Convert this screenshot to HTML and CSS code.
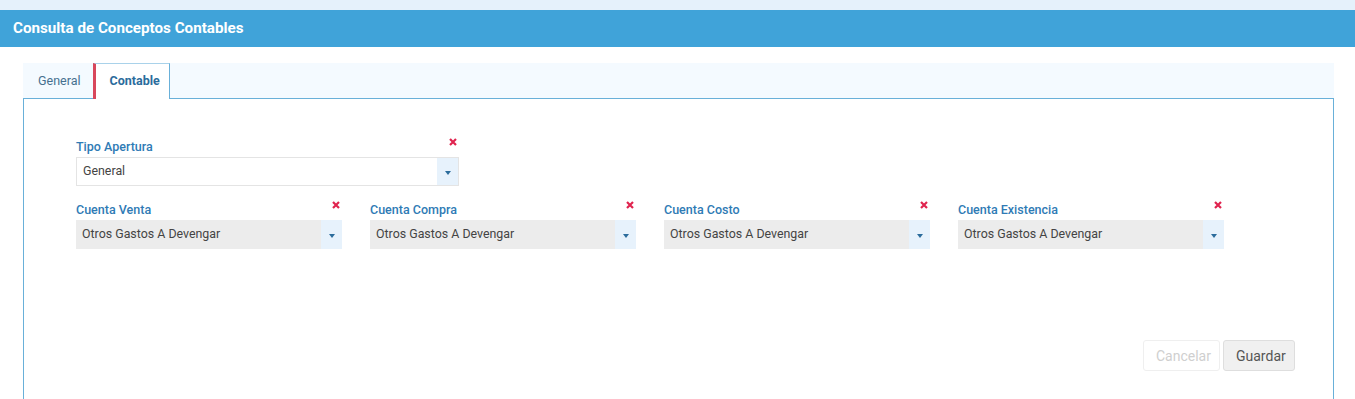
FILE: index.html
```html
<!DOCTYPE html>
<html>
<head>
<meta charset="utf-8">
<link rel="stylesheet" href="styles.css">
</head>
<body>
<div class="topstrip"></div>
<header class="titlebar">Consulta de Conceptos Contables</header>
<div class="card">
  <nav class="tabs">
    <div class="tab">General</div>
    <div class="tab active">Contable</div>
  </nav>
  <section class="panel">
    <div class="field wide">
      <div class="field-head"><span class="label">Tipo Apertura</span><svg class="clear" viewBox="0 0 10 10"><path d="M2 2L8 8M8 2L2 8"/></svg></div>
      <div class="select white"><span class="value">General</span><span class="arrow"><i class="tri"></i></span></div>
    </div>
    <div class="row">
      <div class="field">
        <div class="field-head"><span class="label">Cuenta Venta</span><svg class="clear" viewBox="0 0 10 10"><path d="M2 2L8 8M8 2L2 8"/></svg></div>
        <div class="select"><span class="value">Otros Gastos A Devengar</span><span class="arrow"><i class="tri"></i></span></div>
      </div>
      <div class="field">
        <div class="field-head"><span class="label">Cuenta Compra</span><svg class="clear" viewBox="0 0 10 10"><path d="M2 2L8 8M8 2L2 8"/></svg></div>
        <div class="select"><span class="value">Otros Gastos A Devengar</span><span class="arrow"><i class="tri"></i></span></div>
      </div>
      <div class="field">
        <div class="field-head"><span class="label">Cuenta Costo</span><svg class="clear" viewBox="0 0 10 10"><path d="M2 2L8 8M8 2L2 8"/></svg></div>
        <div class="select"><span class="value">Otros Gastos A Devengar</span><span class="arrow"><i class="tri"></i></span></div>
      </div>
      <div class="field">
        <div class="field-head"><span class="label">Cuenta Existencia</span><svg class="clear" viewBox="0 0 10 10"><path d="M2 2L8 8M8 2L2 8"/></svg></div>
        <div class="select"><span class="value">Otros Gastos A Devengar</span><span class="arrow"><i class="tri"></i></span></div>
      </div>
    </div>
    <div class="actions">
      <button class="btn btn-cancel">Cancelar</button>
      <button class="btn btn-save">Guardar</button>
    </div>
  </section>
</div>
</body>
</html>
```
FILE: styles.css
```css
* { box-sizing: border-box; }
html, body { margin: 0; padding: 0; background: #fff; }
body { font-family: Roboto, "Liberation Sans", sans-serif; overflow: hidden; height: 399px; }
.topstrip { height: 10px; background: #e5f1fb; }
.titlebar {
  height: 37px;
  background: #40a3d9;
  color: #fff;
  font-weight: 700;
  font-size: 15.2px;
  line-height: 37px;
  padding-left: 13px;
}
.card { margin: 16px 21px 0 23px; }
.tabs {
  display: flex;
  height: 35px;
  background: #f4faff;
  position: relative;
  z-index: 1;
}
.tab {
  font-size: 12.5px;
  color: #46708f;
  line-height: 35px;
  padding: 0 12px 0 15px;
}
.tab.active {
  background: #fff;
  color: #2b6c9c;
  font-weight: 700;
  border-left: 3px solid #d8475c;
  border-top: 1px solid #a9d2ea;
  border-right: 1px solid #69b0d9;
  height: 36px;
  line-height: 34px;
  padding: 0 9px 0 14px;
}
.panel {
  border: 1px solid #69b0d9;
  border-bottom: none;
  height: 320px;
  padding: 38px 38px 0 52px;
}
.field { width: 266px; }
.field.wide { width: 383px; }
.field-head {
  display: flex;
  justify-content: space-between;
  align-items: flex-start;
  height: 20px;
}
.label {
  font-size: 12.5px;
  font-weight: 500;
  color: #2f7bb5;
  line-height: 16px;
  padding-top: 2px;
}
.clear {
  width: 10px;
  height: 10px;
  margin-right: 1px;
  stroke: #e0244f;
  stroke-width: 2.2;
  fill: none;
}
.select {
  display: flex;
  height: 29px;
  background: #ececec;
}
.select.white { background: #fff; border: 1px solid #e4e4e4; }
.value {
  flex: 1;
  font-size: 12.4px;
  color: #444;
  line-height: 28px;
  padding-left: 6px;
}
.select.white .value { line-height: 26px; }
.arrow {
  width: 21px;
  background: #e7f2fc;
  display: flex;
  align-items: center;
  justify-content: center;
}
.tri {
  width: 0; height: 0;
  border-left: 3.5px solid transparent;
  border-right: 3.5px solid transparent;
  border-top: 4px solid #2b6c9c;
  margin-top: 2px;
}
.row { display: flex; gap: 28px; margin-top: 14px; }
.actions {
  display: flex;
  justify-content: flex-end;
  gap: 3px;
  margin-top: 91px;
}
.btn {
  font-family: Roboto, "Liberation Sans", sans-serif;
  font-size: 14px;
  height: 31px;
  border-radius: 3px;
  padding: 0 12px;
}
.btn-cancel { background: #fff; border: 1px solid #efefef; color: #cfcfcf; width: 77px; }
.btn-save { background: #f0f0f0; border: 1px solid #dedede; color: #555; width: 72px; }
```
